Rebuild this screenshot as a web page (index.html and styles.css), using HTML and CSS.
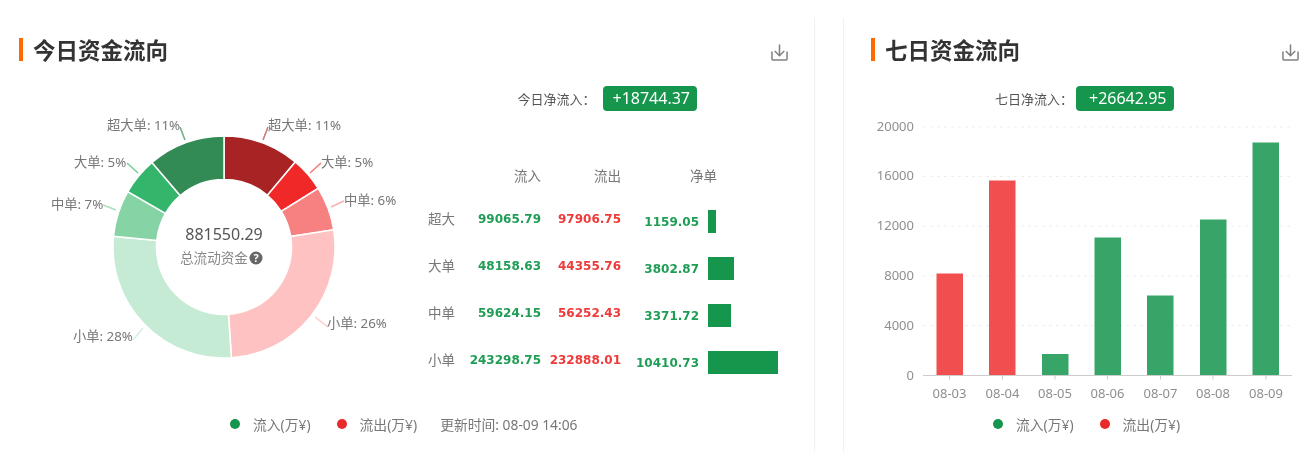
FILE: index.html
```html
<!DOCTYPE html>
<html lang="zh-CN">
<head>
<meta charset="utf-8">
<title>资金流向</title>
<link rel="stylesheet" href="styles.css">
</head>
<body>
<div class="page">
  <section class="panel panel-today">
    <header class="panel-head">
      <h2 class="panel-title">今日资金流向</h2>
      <svg class="download" viewBox="0 0 18 18"><path d="M9 .5V12.5M4 7.5l5 5 5-5M1 8v7.5a1.5 1.5 0 0 0 1.5 1.5h13a1.5 1.5 0 0 0 1.5-1.5V8"/></svg>
    </header>
    <div class="today-main">
      <svg class="donut" viewBox="0 86 428 326">
        <g class="slices">
          <path fill="#a82424" d="M224 136A111 111 0 0 1 295.3 161.9L267.4 195.3A67.5 67.5 0 0 0 224 179.5Z"/>
          <path fill="#f12828" d="M295.3 161.9A111 111 0 0 1 318.2 188.3L281.3 211.3A67.5 67.5 0 0 0 267.4 195.3Z"/>
          <path fill="#f78080" d="M318.2 188.3A111 111 0 0 1 333.7 229.8L290.7 236.5A67.5 67.5 0 0 0 281.3 211.3Z"/>
          <path fill="#fec2c2" d="M333.7 229.8A111 111 0 0 1 231.4 357.8L228.5 314.4A67.5 67.5 0 0 0 290.7 236.5Z"/>
          <path fill="#c5ebd5" d="M231.4 357.8A111 111 0 0 1 113.5 236.3L156.8 240.5A67.5 67.5 0 0 0 228.5 314.4Z"/>
          <path fill="#86d4a5" d="M113.5 236.3A111 111 0 0 1 127.8 191.7L165.5 213.4A67.5 67.5 0 0 0 156.8 240.5Z"/>
          <path fill="#33b66b" d="M127.8 191.7A111 111 0 0 1 152 162.5L180.2 195.6A67.5 67.5 0 0 0 165.5 213.4Z"/>
          <path fill="#328a55" d="M152 162.5A111 111 0 0 1 224 136V179.5A67.5 67.5 0 0 0 180.2 195.6Z"/>
        </g>
        <g class="leaders">
          <path stroke="#c97a7a" d="M268 127L263 140"/>
          <path stroke="#f77a7a" d="M321 163L310 173"/>
          <path stroke="#fab0b0" d="M344 201L331 207"/>
          <path stroke="#fed5d5" d="M315 317L328 327"/>
          <path stroke="#d5f0e0" d="M143 328L133 340"/>
          <path stroke="#a8e0bf" d="M103 205L116 210"/>
          <path stroke="#77cf9c" d="M127 163L138 173"/>
          <path stroke="#74b08c" d="M180 127L185 140"/>
        </g>
        <g class="slice-labels">
          <text x="268" y="130">超大单: 11%</text>
          <text x="321" y="167">大单: 5%</text>
          <text x="344" y="205">中单: 6%</text>
          <text x="327" y="328">小单: 26%</text>
          <text x="73" y="341">小单: 28%</text>
          <text x="51" y="209">中单: 7%</text>
          <text x="74" y="167">大单: 5%</text>
          <text x="107" y="130">超大单: 11%</text>
        </g>
        <text class="donut-total" x="224" y="240">881550.29</text>
        <text class="donut-caption" x="180" y="263">总流动资金</text>
        <circle class="help-disc" cx="256" cy="258" r="6.5"/>
        <text class="help-mark" x="256" y="262">?</text>
      </svg>
      <div class="today-side">
        <div class="net-row net-row-today">
          <span class="net-label">今日净流入：</span>
          <span class="net-badge">+18744.37</span>
        </div>
        <div class="flow-table">
          <span class="cell"></span>
          <span class="col-head">流入</span>
          <span class="col-head">流出</span>
          <span class="col-head col-head-net">净单</span>
          <span class="cell"></span>

          <span class="row-name">超大</span>
          <span class="num in">99065.79</span>
          <span class="num out">97906.75</span>
          <span class="num net">1159.05</span>
          <span class="net-bar" style="width:8px"></span>

          <span class="row-name">大单</span>
          <span class="num in">48158.63</span>
          <span class="num out">44355.76</span>
          <span class="num net">3802.87</span>
          <span class="net-bar" style="width:26px"></span>

          <span class="row-name">中单</span>
          <span class="num in">59624.15</span>
          <span class="num out">56252.43</span>
          <span class="num net">3371.72</span>
          <span class="net-bar" style="width:23px"></span>

          <span class="row-name">小单</span>
          <span class="num in">243298.75</span>
          <span class="num out">232888.01</span>
          <span class="num net">10410.73</span>
          <span class="net-bar" style="width:70px"></span>
        </div>
      </div>
    </div>
    <div class="legend legend-today">
      <span class="legend-item"><i class="dot dot-in"></i>流入(万¥)</span>
      <span class="legend-item"><i class="dot dot-out"></i>流出(万¥)</span>
      <span class="legend-time">更新时间: 08-09 14:06</span>
    </div>
  </section>

  <section class="panel panel-week">
    <header class="panel-head">
      <h2 class="panel-title">七日资金流向</h2>
      <svg class="download" viewBox="0 0 18 18"><path d="M9 .5V12.5M4 7.5l5 5 5-5M1 8v7.5a1.5 1.5 0 0 0 1.5 1.5h13a1.5 1.5 0 0 0 1.5-1.5V8"/></svg>
    </header>
    <div class="net-row net-row-week">
      <span class="net-label">七日净流入：</span>
      <span class="net-badge net-badge-week">+26642.95</span>
    </div>
    <svg class="bars" viewBox="844 111 461 301">
      <g class="grid">
        <path d="M923 127H1292"/>
        <path d="M923 176.5H1292"/>
        <path d="M923 226H1292"/>
        <path d="M923 276H1292"/>
        <path d="M923 325.5H1292"/>
      </g>
      <g class="y-labels">
        <text x="914" y="131">20000</text>
        <text x="914" y="180">16000</text>
        <text x="914" y="230">12000</text>
        <text x="914" y="280">8000</text>
        <text x="914" y="330">4000</text>
        <text x="914" y="380">0</text>
      </g>
      <g class="bar-down">
        <rect x="936.5" y="273.5" width="26.5" height="102"/>
        <rect x="989" y="180.5" width="26.5" height="195"/>
      </g>
      <g class="bar-up">
        <rect x="1042" y="354" width="26.5" height="21.5"/>
        <rect x="1094.5" y="237.5" width="26.5" height="138"/>
        <rect x="1147" y="295.5" width="26.5" height="80"/>
        <rect x="1200" y="219.5" width="26.5" height="156"/>
        <rect x="1252.5" y="142.5" width="26.5" height="233"/>
      </g>
      <path class="axis" d="M923 375.5H1292M949.5 375.5v4M1002.5 375.5v4M1055 375.5v4M1107.5 375.5v4M1160.5 375.5v4M1213 375.5v4M1266 375.5v4"/>
      <g class="x-labels">
        <text x="949.5" y="398">08-03</text>
        <text x="1002.5" y="398">08-04</text>
        <text x="1055" y="398">08-05</text>
        <text x="1107.5" y="398">08-06</text>
        <text x="1160.5" y="398">08-07</text>
        <text x="1213" y="398">08-08</text>
        <text x="1266" y="398">08-09</text>
      </g>
    </svg>
    <div class="legend legend-week">
      <span class="legend-item"><i class="dot dot-in"></i>流入(万¥)</span>
      <span class="legend-item"><i class="dot dot-out"></i>流出(万¥)</span>
    </div>
  </section>
</div>
</body>
</html>
```
FILE: styles.css
```css
* { box-sizing: border-box; }
html, body { margin: 0; padding: 0; background: #fff; }
body {
  font-family: "Noto Sans", "Noto Sans CJK SC", sans-serif;
  color: #666;
  font-size: 13px;
}
.page {
  display: flex;
  width: 1305px;
  height: 452px;
  padding-top: 18px;
  overflow: hidden;
  filter: blur(0.4px);
}
.panel { display: flex; flex-direction: column; }
.panel-today { width: 815px; border-right: 1px solid #f1f1f1; }
.panel-week { flex: 1; margin-left: 28px; border-left: 1px solid #f1f1f1; }

.panel-head {
  display: flex;
  align-items: center;
  justify-content: space-between;
  height: 23px;
  margin-top: 20px;
  margin-bottom: 25px;
}
.panel-today .panel-head { padding: 0 26px 0 19px; }
.panel-week .panel-head { padding: 0 6px 0 27px; }
.panel-title {
  margin: 0;
  padding-left: 10px;
  border-left: 4px solid #ff6a00;
  height: 23px;
  font-size: 22.5px;
  line-height: 25px;
  font-weight: 700;
  color: #333;
}
.download {
  width: 17px;
  height: 17px;
  margin-top: 6px;
  fill: none;
  stroke: #808080;
  stroke-width: 1.6;
}

.today-main { display: flex; height: 326px; }
.donut { width: 428px; height: 326px; flex: none; }
.slices path { stroke: #fff; stroke-width: 1.5; }
.leaders path { fill: none; stroke-width: 1.6; }
.slice-labels text { font-size: 13.3px; fill: #777; }
.donut-total { font-size: 16px; fill: #555; text-anchor: middle; }
.donut-caption { font-size: 13.6px; fill: #888; }
.help-disc { fill: #666; }
.help-mark { font-size: 11px; font-weight: 700; fill: #fff; text-anchor: middle; }

.today-side { display: flex; flex-direction: column; width: 386px; }
.net-row { display: flex; align-items: center; height: 25px; }
.net-row-today { justify-content: flex-end; padding-right: 117px; }
.net-row-week { padding-left: 151px; }
.net-label { font-size: 13px; color: #555; width: 86px; white-space: nowrap; }
.net-row-week .net-label { width: 81px; }
.net-badge {
  display: block;
  height: 25px;
  padding: 0 7px 0 9px;
  border-radius: 4px;
  background: #16964d;
  color: #fff;
  font-size: 16px;
  line-height: 25px;
  white-space: nowrap;
}
.net-badge-week { padding: 0 7px 0 13px; }

.flow-table {
  display: grid;
  grid-template-columns: 27px 86px 80px 78px 88px;
  grid-template-rows: 34px repeat(4, 47px);
  column-gap: 0;
  margin-top: 53px;
  align-items: center;
}
.col-head { align-self: start; margin-top: 1px; text-align: right; font-size: 13.5px; color: #777; }
.col-head-net { margin-right: -18px; }
.row-name { font-size: 13.5px; color: #777; padding-bottom: 7px; white-space: nowrap; }
.num {
  font-family: "DejaVu Sans", sans-serif;
  font-size: 12px;
  font-weight: 700;
  text-align: right;
  white-space: nowrap;
  padding-bottom: 5px;
}
.in { color: #1f9d55; }
.out { color: #ef3a3a; }
.net { color: #1f9d55; padding-bottom: 0; padding-top: 1px; }
.net-bar { display: block; height: 23px; margin-left: 9px; background: #16964d; }

.legend { display: flex; align-items: center; height: 24px; color: #777; font-size: 13.8px; }
.legend-today { padding-left: 230px; }
.legend-week { padding-left: 149px; }
.legend-item { display: flex; align-items: center; margin-right: 26px; white-space: nowrap; }
.legend-today .legend-time { margin-left: -3px; white-space: nowrap; }
.dot { width: 10px; height: 10px; border-radius: 50%; margin-right: 13px; }
.dot-in { background: #16964d; }
.dot-out { background: #e92a2a; }

.bars { width: 461px; height: 301px; display: block; }
.grid path { stroke: #eeeeee; stroke-width: 1; stroke-dasharray: 3 4; fill: none; }
.y-labels text { font-size: 13px; fill: #8f8f8f; text-anchor: end; }
.x-labels text { font-size: 13px; fill: #8f8f8f; text-anchor: middle; }
.bar-down rect { fill: #f14f4f; }
.bar-up rect { fill: #37a567; }
.axis { stroke: #ccc; stroke-width: 1; fill: none; }
```
